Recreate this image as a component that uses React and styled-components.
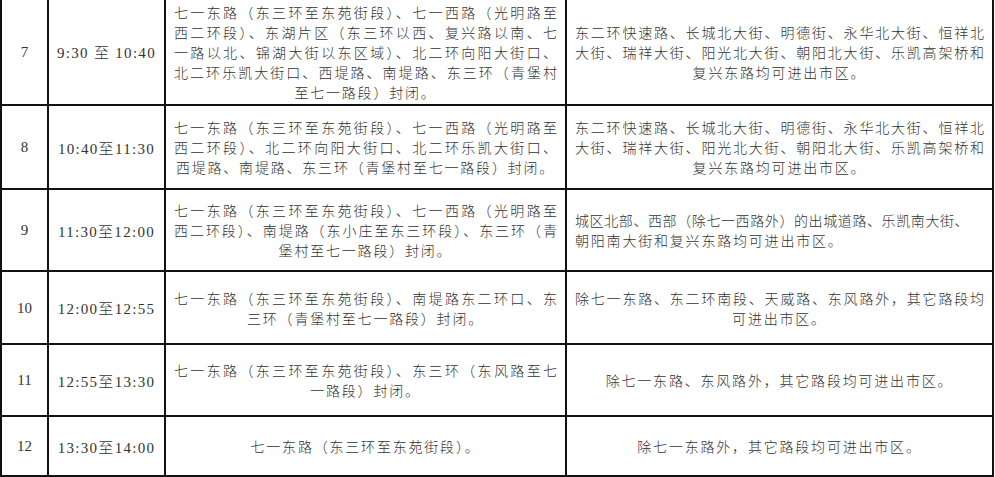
import styled, { createGlobalStyle } from 'styled-components';

const GlobalStyle = createGlobalStyle`
  html, body {
    margin: 0;
    padding: 0;
    background: #ffffff;
    overflow: hidden;
  }
`;

// each cell: list of lines; every line but the last is justified, the last is centred
const rows = [
  {
    no: '7',
    time: '9:30 至 10:40',
    height: 107,
    closed: [
      '七一东路（东三环至东苑街段）、七一西路（光明路至',
      '西二环段）、东湖片区（东三环以西、复兴路以南、七',
      '一路以北、锦湖大街以东区域）、北二环向阳大街口、',
      '北二环乐凯大街口、西堤路、南堤路、东三环（青堡村',
      '至七一路段）封闭。',
    ],
    open: [
      '东二环快速路、长城北大街、明德街、永华北大街、恒祥北',
      '大街、瑞祥大街、阳光北大街、朝阳北大街、乐凯高架桥和',
      '复兴东路均可进出市区。',
    ],
  },
  {
    no: '8',
    time: '10:40至11:30',
    height: 84,
    closed: [
      '七一东路（东三环至东苑街段）、七一西路（光明路至',
      '西二环段）、北二环向阳大街口、北二环乐凯大街口、',
      '西堤路、南堤路、东三环（青堡村至七一路段）封闭。',
    ],
    open: [
      '东二环快速路、长城北大街、明德街、永华北大街、恒祥北',
      '大街、瑞祥大街、阳光北大街、朝阳北大街、乐凯高架桥和',
      '复兴东路均可进出市区。',
    ],
  },
  {
    no: '9',
    time: '11:30至12:00',
    height: 82,
    closed: [
      '七一东路（东三环至东苑街段）、七一西路（光明路至',
      '西二环段）、南堤路（东小庄至东三环段）、东三环（青',
      '堡村至七一路段）封闭。',
    ],
    open: [
      '城区北部、西部（除七一西路外）的出城道路、乐凯南大街、',
      '朝阳南大街和复兴东路均可进出市区。',
    ],
    openLeft: true,
  },
  {
    no: '10',
    time: '12:00至12:55',
    height: 73,
    closed: [
      '七一东路（东三环至东苑街段）、南堤路东二环口、东',
      '三环（青堡村至七一路段）封闭。',
    ],
    open: [
      '除七一东路、东二环南段、天威路、东风路外，其它路段均',
      '可进出市区。',
    ],
  },
  {
    no: '11',
    time: '12:55至13:30',
    height: 72,
    closed: [
      '七一东路（东三环至东苑街段）、东三环（东风路至七',
      '一路段）封闭。',
    ],
    open: ['除七一东路、东风路外，其它路段均可进出市区。'],
  },
  {
    no: '12',
    time: '13:30至14:00',
    height: 60,
    closed: ['七一东路（东三环至东苑街段）。'],
    open: ['除七一东路外，其它路段均可进出市区。'],
  },
];

const columns = [47, 117, 401, 427];

const Table = styled.table`
  width: 994px;
  margin-top: -3px;
  border-collapse: collapse;
  table-layout: fixed;
  font-family: "Liberation Serif", "Noto Sans CJK SC", serif;
  color: #333333;
`;

const Col = styled.col`
  width: ${(p) => p.$width}px;
`;

const Row = styled.tr`
  height: ${(p) => p.$height}px;
`;

const Cell = styled.td`
  border: 2px solid #111111;
  padding: 0 ${(p) => p.$padX}px;
  vertical-align: middle;
  text-align: center;
`;

const NoText = styled.span`
  font-size: 15px;
`;

const TimeText = styled.span`
  font-size: 15px;
  font-weight: 300;
  letter-spacing: 1.3px;
  white-space: nowrap;
`;

const Line = styled.div`
  font-family: "Noto Sans CJK SC", sans-serif;
  font-size: 14px;
  font-weight: 300;
  line-height: 20px;
  text-align: ${(p) => p.$align};
  text-align-last: ${(p) => p.$align};
  letter-spacing: ${(p) => p.$spacing}px;
  white-space: ${(p) => (p.$align === 'justify' ? 'normal' : 'nowrap')};
`;

const TextCell = ({ lines, left }) =>
  lines.map((line, i) => {
    const last = i === lines.length - 1;
    if (left) {
      return (
        <Line key={i} $align="left" $spacing={last ? 1.8 : 0.6}>
          {line}
        </Line>
      );
    }
    return (
      <Line key={i} $align={last ? 'center' : 'justify'} $spacing={last ? 1.8 : 0}>
        {line}
      </Line>
    );
  });

const App = () => (
  <>
    <GlobalStyle />
    <Table>
      <colgroup>
        {columns.map((w, i) => (
          <Col key={i} $width={w} />
        ))}
      </colgroup>
      <tbody>
        {rows.map((row) => (
          <Row key={row.no} $height={row.height}>
            <Cell $padX={0}>
              <NoText>{row.no}</NoText>
            </Cell>
            <Cell $padX={0}>
              <TimeText>{row.time}</TimeText>
            </Cell>
            <Cell $padX={8}>
              <TextCell lines={row.closed} />
            </Cell>
            <Cell $padX={8}>
              <TextCell lines={row.open} left={row.openLeft} />
            </Cell>
          </Row>
        ))}
      </tbody>
    </Table>
  </>
);

export default App;
